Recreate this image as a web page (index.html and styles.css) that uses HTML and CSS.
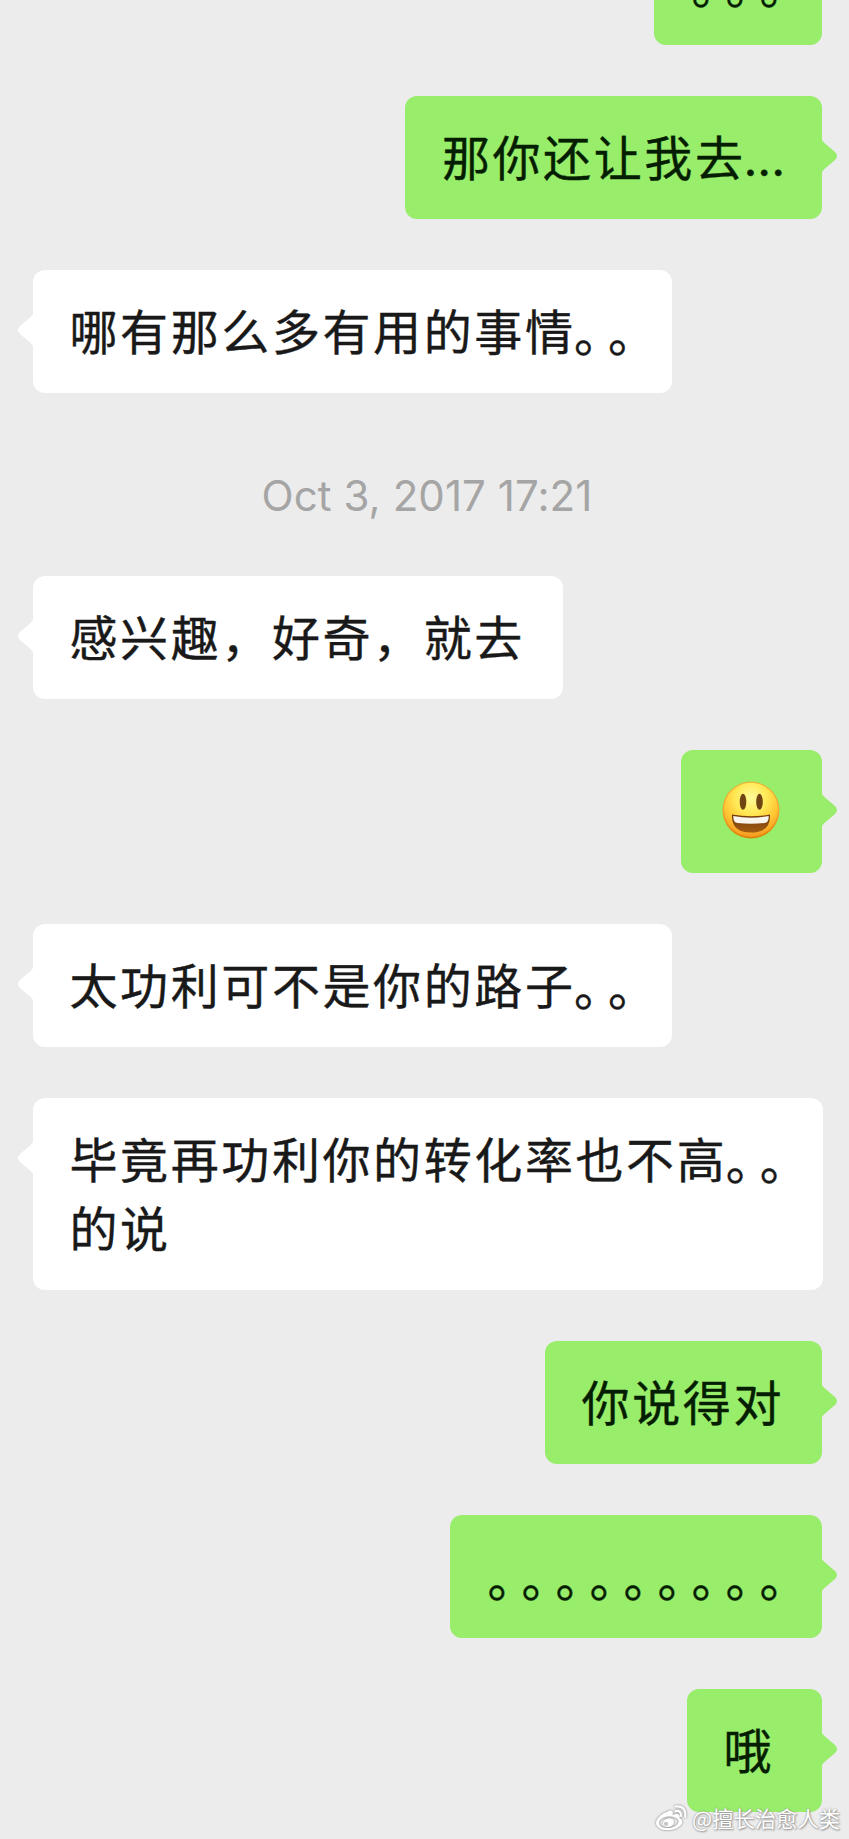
FILE: index.html
```html
<!DOCTYPE html>
<html lang="zh-CN">
<head>
<meta charset="utf-8">
<title>Chat</title>
<link rel="stylesheet" href="styles.css">
</head>
<body>
<svg class="defs" width="0" height="0">
  <symbol id="tail" viewBox="0 0 17 36"><path d="M0 0Q1 3 4 5.500L14 14Q18 18 14 22L4 30.500Q1 33 0 36Z"/></symbol>
</svg>
<main class="chat">
  <div class="bubble sent"><span class="stops">。。。</span></div>
  <div class="bubble sent">那你还让我去<span class="dots">...</span><svg class="tail"><use href="#tail"/></svg></div>
  <div class="bubble received">哪有那么多有用的事情<span class="stops">。。</span><svg class="tail"><use href="#tail"/></svg></div>
  <time class="stamp">Oct 3, 2017 17:21</time>
  <div class="bubble received">感兴趣，好奇，就去<svg class="tail"><use href="#tail"/></svg></div>
  <div class="bubble sent">
    <svg class="emoji" viewBox="0 0 58 58" role="img" aria-label="😃">
      <defs>
        <linearGradient id="rim" x1="0" y1="0" x2="0" y2="1"><stop offset="0" stop-color="#e9b838"/><stop offset=".55" stop-color="#f5a52a"/><stop offset="1" stop-color="#dc8208"/></linearGradient>
        <radialGradient id="face" cx=".5" cy=".28" r=".72"><stop offset="0" stop-color="#fffb9b"/><stop offset=".4" stop-color="#ffe956"/><stop offset=".72" stop-color="#ffc634"/><stop offset="1" stop-color="#f69a20"/></radialGradient>
        <linearGradient id="mouth" x1="0" y1="0" x2="0" y2="1"><stop offset="0" stop-color="#6f3a0b"/><stop offset="1" stop-color="#a35c12"/></linearGradient>
      </defs>
      <circle cx="29" cy="29" r="28.500" fill="url(#rim)"/>
      <circle cx="29" cy="28.700" r="27" fill="url(#face)"/>
      <ellipse cx="21" cy="20.800" rx="3.300" ry="8" fill="#704313"/>
      <ellipse cx="37.500" cy="20.800" rx="3.300" ry="8" fill="#704313"/>
      <path d="M10 33.500Q29 37 48 33.500Q49 51.500 29 51.500T10 33.500Z" fill="url(#mouth)"/>
      <path d="M11.300 35Q29 38.500 46.700 35Q47 41.500 42.500 42Q29 43.500 15.500 42Q11 41.500 11.300 35Z" fill="#f8f5ef"/>
    </svg>
    <svg class="tail"><use href="#tail"/></svg>
  </div>
  <div class="bubble received">太功利可不是你的路子<span class="stops">。。</span><svg class="tail"><use href="#tail"/></svg></div>
  <div class="bubble received">毕竟再功利你的转化率也不高<span class="stops">。。</span><br>的说<svg class="tail"><use href="#tail"/></svg></div>
  <div class="bubble sent">你说得对<svg class="tail"><use href="#tail"/></svg></div>
  <div class="bubble sent"><span class="stops">。。。。。。。。。</span><svg class="tail"><use href="#tail"/></svg></div>
  <div class="bubble sent">哦<svg class="tail"><use href="#tail"/></svg></div>
  <div class="watermark">
    <svg class="weibo" viewBox="0 0 32 28">
      <path class="body" fill-rule="evenodd" d="M12 8C16 5 19 7 17.500 11C22 9 26 10 24.500 14C29 16 28 21 22 24C16 27 8 27 4 24C-1 20 1 16 5 12C7.500 9.500 10 8.500 12 8ZM13 12.500C7 13 3.500 16.500 4 19.500C4.500 23 9 24.500 14 24C20 23.500 24 20 23.500 17C23 13.500 18 12 13 12.500ZM13 14.500C18 13.500 20 17 18.500 20C17 23 12 24 9 22C6 20 8 15.500 13 14.500ZM11 18A2 2 0 1 0 11 22A2 2 0 1 0 11 18Z"/>
      <path class="wave" d="M20.500 7Q26 6 26 12M20.500 2.500Q31 1 30.300 13"/>
    </svg>
    <span>@擅长治愈人类</span>
  </div>
</main>
</body>
</html>
```
FILE: styles.css
```css
body {
  margin: 0;
  background: #ececec;
}

.defs {
  position: absolute;
}

.chat {
  position: relative;
  box-sizing: border-box;
  height: 1839px;
  overflow: hidden;
  display: flex;
  flex-direction: column;
  align-items: flex-start;
  justify-content: flex-end;
  gap: 51px;
  padding: 0 24px 27px 33px;
  font-family: "Noto Sans CJK SC", sans-serif;
}

.bubble {
  position: relative;
  flex: none;
  box-sizing: border-box;
  min-width: 135px;
  min-height: 123px;
  padding: 25px 38px 29px 36.500px;
  border-radius: 12px;
  font-size: 48px;
  line-height: 69px;
  letter-spacing: 2.600px;
  white-space: nowrap;
  text-spacing-trim: space-all;
  -webkit-text-stroke: 0.400px currentColor;
}

.received {
  background: #fff;
  color: #191919;
  fill: #fff;
}

.sent {
  align-self: flex-end;
  margin-right: 3px;
  background: #98ed6b;
  color: #051e02;
  fill: #98ed6b;
}

.stops {
  margin: 0 -9.500px 0 0.500px;
  line-height: 0;
  letter-spacing: -14px;
  vertical-align: -2px;
}

.received .stops {
  margin: 0 -8.500px 0 -1.500px;
}

.dots {
  margin: 0 -1px 0 -2px;
  font-family: Inter, sans-serif;
  line-height: 0;
  letter-spacing: 0;
}

.tail {
  position: absolute;
  top: 42px;
  width: 17px;
  height: 36px;
}

.sent .tail {
  left: calc(100% - 1px);
}

.received .tail {
  right: calc(100% - 1px);
  transform: scaleX(-1);
}

.stamp {
  align-self: center;
  height: 81px;
  box-sizing: border-box;
  padding: 19px 4px 0 0;
  font: 42px/66px Inter, sans-serif;
  letter-spacing: 0.080px;
  color: #a5a5a5;
}

.emoji {
  display: block;
  width: 58px;
  height: 58px;
  margin: 6px 4px 5px 4.500px;
}

.watermark {
  position: absolute;
  right: 9px;
  bottom: 5px;
  display: flex;
  align-items: center;
  gap: 5px;
  color: #fff;
  font-size: 21.300px;
  line-height: 32px;
  text-shadow: 0 0 2px #888, 1px 1px 2px #999;
}

.weibo {
  width: 32px;
  height: 28px;
  filter: drop-shadow(0 0 1px #777);
}

.body {
  fill: #fff;
}

.wave {
  fill: none;
  stroke: #fff;
  stroke-width: 2.200px;
  stroke-linecap: round;
}
```
